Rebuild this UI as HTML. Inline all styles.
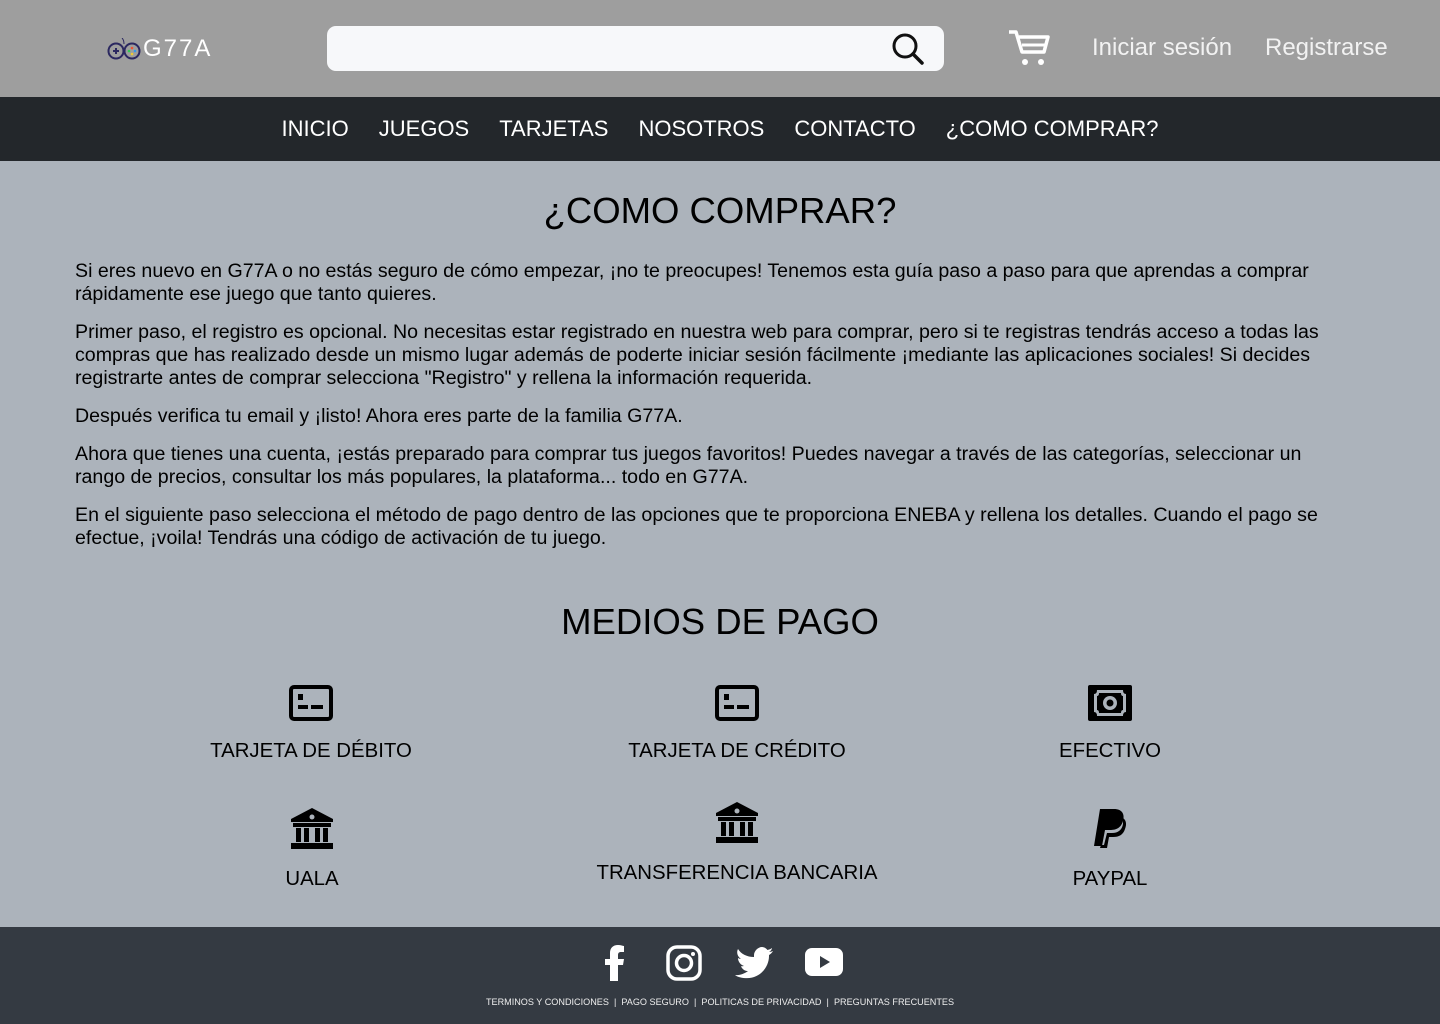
<!DOCTYPE html>
<html><head><meta charset="utf-8"><style>
*{margin:0;padding:0;box-sizing:border-box}
body{width:1440px;height:1024px;overflow:hidden;font-family:"Liberation Sans",Arial,sans-serif;background:#acb3bb;color:#000;position:relative}
.hdr{position:absolute;top:0;left:0;width:1440px;height:97px;background:#9e9e9e}
.logo{position:absolute;left:107px;top:35px;display:flex;align-items:center;color:#fff;font-size:24px;letter-spacing:2px}
.search{position:absolute;left:327px;top:26px;width:617px;height:45px;background:#f7f8fa;border-radius:9px}
.hl{position:absolute;top:34px;color:#f2f2f2;font-size:24px}
.nav{position:absolute;top:97px;left:0;width:1440px;height:64px;background:#23272b;display:flex;justify-content:center;align-items:center;gap:30px;color:#fff;font-size:22px}
h1{position:absolute;top:190px;width:1440px;text-align:center;font-weight:normal;font-size:36.5px}
.txt{position:absolute;left:75px;top:260px;font-size:19.6px;line-height:23px;white-space:nowrap}
.txt p{margin-bottom:15px}
h2{position:absolute;top:601px;width:1440px;text-align:center;font-weight:normal;font-size:36.5px}
.pm{position:absolute;width:400px;text-align:center;font-size:20.4px}
.pm svg{display:block;margin:0 auto}
.ft{position:absolute;top:927px;left:0;width:1440px;height:97px;background:#343a42;color:#fff}
.links{position:absolute;top:997px;width:1440px;text-align:center;font-size:9.1px;color:#eee}
</style></head><body>
<div class="hdr">
 <div class="logo"><svg width="36" height="22" viewBox="0 0 36 22"><circle cx="9" cy="13" r="7.5" fill="none" stroke="#2b2860" stroke-width="2"/><circle cx="25" cy="13" r="7.5" fill="none" stroke="#2b2860" stroke-width="2"/><path d="M6 13h6M9 10v6" stroke="#2b2860" stroke-width="2"/><circle cx="25" cy="10" r="1.3" fill="#e53"/><circle cx="22" cy="13" r="1.3" fill="#3c5"/><circle cx="28" cy="13" r="1.3" fill="#39e"/><circle cx="25" cy="16" r="1.3" fill="#ec3"/><path d="M17 6 Q17 2 15 0" stroke="#2b2860" fill="none"/></svg>G77A</div>
 <div class="search"><svg style="position:absolute;left:563px;top:5px" width="36" height="36" viewBox="0 0 36 36"><circle cx="15" cy="15" r="11" fill="none" stroke="#111" stroke-width="3"/><path d="M23 23l9 9" stroke="#111" stroke-width="3.5" stroke-linecap="round"/></svg></div>
 <svg style="position:absolute;left:1007px;top:28px" width="44" height="40" viewBox="0 0 44 40"><path d="M2 4h7l6 20h22l4-15H12" fill="none" stroke="#fff" stroke-width="3.5" stroke-linejoin="round"/><path d="M15 17h24" stroke="#fff" stroke-width="3"/><circle cx="18" cy="34" r="3" fill="#fff"/><circle cx="34" cy="34" r="3" fill="#fff"/></svg>
 <div class="hl" style="left:1092px">Iniciar sesión</div>
 <div class="hl" style="left:1265px">Registrarse</div>
</div>
<div class="nav"><span>INICIO</span><span>JUEGOS</span><span>TARJETAS</span><span>NOSOTROS</span><span>CONTACTO</span><span>¿COMO COMPRAR?</span></div>
<h1>¿COMO COMPRAR?</h1>
<div class="txt">
<p>Si eres nuevo en G77A o no estás seguro de cómo empezar, ¡no te preocupes! Tenemos esta guía paso a paso para que aprendas a comprar<br>rápidamente ese juego que tanto quieres.</p>
<p>Primer paso, el registro es opcional. No necesitas estar registrado en nuestra web para comprar, pero si te registras tendrás acceso a todas las<br>compras que has realizado desde un mismo lugar además de poderte iniciar sesión fácilmente ¡mediante las aplicaciones sociales! Si decides<br>registrarte antes de comprar selecciona "Registro" y rellena la información requerida.</p>
<p>Después verifica tu email y ¡listo! Ahora eres parte de la familia G77A.</p>
<p>Ahora que tienes una cuenta, ¡estás preparado para comprar tus juegos favoritos! Puedes navegar a través de las categorías, seleccionar un<br>rango de precios, consultar los más populares, la plataforma... todo en G77A.</p>
<p>En el siguiente paso selecciona el método de pago dentro de las opciones que te proporciona ENEBA y rellena los detalles. Cuando el pago se<br>efectue, ¡voila! Tendrás una código de activación de tu juego.</p>
</div>
<h2>MEDIOS DE PAGO</h2>
<div class="pm" style="left:111px;top:685px"><svg width="44" height="36" viewBox="0 0 44 36"><rect x="2" y="2" width="40" height="32" rx="3" fill="none" stroke="#000" stroke-width="4"/><rect x="9" y="9" width="5" height="6"/><rect x="9" y="20" width="10" height="4"/><rect x="22" y="20" width="12" height="4"/></svg><div style="margin-top:19px">TARJETA DE DÉBITO</div></div>
<div class="pm" style="left:537px;top:685px"><svg width="44" height="36" viewBox="0 0 44 36"><rect x="2" y="2" width="40" height="32" rx="3" fill="none" stroke="#000" stroke-width="4"/><rect x="9" y="9" width="5" height="6"/><rect x="9" y="20" width="10" height="4"/><rect x="22" y="20" width="12" height="4"/></svg><div style="margin-top:19px">TARJETA DE CRÉDITO</div></div>
<div class="pm" style="left:910px;top:685px"><svg width="44" height="36" viewBox="0 0 44 36"><rect x="0" y="0" width="44" height="36" rx="2"/><path d="M6 9 Q9 9 9 5 H35 Q35 9 38 9 V27 Q35 27 35 31 H9 Q9 27 6 27Z" fill="#acb3bb"/><path d="M9 11 Q11 11 11 8 H33 Q33 11 35 11 V25 Q33 25 33 28 H11 Q11 25 9 25Z"/><circle cx="22" cy="18" r="7" fill="#acb3bb"/><circle cx="22" cy="18" r="3.5"/></svg><div style="margin-top:19px">EFECTIVO</div></div>
<div class="pm" style="left:112px;top:808px"><svg width="44" height="42" viewBox="0 0 44 42"><path d="M22 0L1 11v3h42v-3z"/><circle cx="22" cy="9" r="2.5" fill="#acb3bb"/><rect x="3" y="15" width="38" height="4"/><rect x="6" y="20" width="5" height="14"/><rect x="14" y="20" width="5" height="14"/><rect x="25" y="20" width="5" height="14"/><rect x="33" y="20" width="5" height="14"/><rect x="1" y="35" width="42" height="6"/></svg><div style="margin-top:18px">UALA</div></div>
<div class="pm" style="left:537px;top:802px"><svg width="44" height="42" viewBox="0 0 44 42"><path d="M22 0L1 11v3h42v-3z"/><circle cx="22" cy="9" r="2.5" fill="#acb3bb"/><rect x="3" y="15" width="38" height="4"/><rect x="6" y="20" width="5" height="14"/><rect x="14" y="20" width="5" height="14"/><rect x="25" y="20" width="5" height="14"/><rect x="33" y="20" width="5" height="14"/><rect x="1" y="35" width="42" height="6"/></svg><div style="margin-top:18px">TRANSFERENCIA BANCARIA</div></div>
<div class="pm" style="left:910px;top:808px"><svg width="36" height="42" viewBox="0 0 36 42"><path d="M8 1h14c8 0 11 5 9 12-2 7-7 9-13 9h-5l-3 16H2z"/><path d="M31 10c3 2 4 6 2 11-2 6-6 8-12 8h-4l-2 11H8l1-3h3l3-12h5c6 0 10-3 11-9z"/></svg><div style="margin-top:18px">PAYPAL</div></div>
<div class="ft">
 <svg style="position:absolute;left:603px;top:18px" width="24" height="36" viewBox="0 0 24 36"><path d="M15 36V20h5l1-6h-6v-4c0-2 1-3 3-3h3V1c-1 0-3-1-6-1-5 0-8 3-8 8v6H2v6h5v16z" fill="#fff"/></svg>
 <svg style="position:absolute;left:666px;top:18px" width="36" height="36" viewBox="0 0 36 36"><rect x="2" y="2" width="32" height="32" rx="9" fill="none" stroke="#fff" stroke-width="3.5"/><circle cx="18" cy="18" r="7.5" fill="none" stroke="#fff" stroke-width="3.5"/><circle cx="27" cy="9" r="2" fill="#fff"/></svg>
 <svg style="position:absolute;left:735px;top:20px" width="38" height="32" viewBox="0 0 38 32"><path d="M38 4c-1 .6-3 1-4 1 2-1 3-3 3-4-1 1-3 1.5-4.5 2C31 1 29 0 27 0c-4 0-8 4-8 8v2C12 10 6 7 3 2c-2 4 0 8 3 10-1 0-2-.5-3-1 0 4 3 7 6 8-1 .3-2 .3-3 .1 1 3 4 5 7 5-3 2-7 4-11 4H0c3 2 7 3 12 3 14 0 22-12 22-22v-1c1.5-1 3-2.5 4-4z" fill="#fff"/></svg>
 <svg style="position:absolute;left:805px;top:21px" width="38" height="28" viewBox="0 0 38 28"><rect x="0" y="0" width="38" height="28" rx="7" fill="#fff"/><path d="M15 8v12l10-6z" fill="#343a42"/></svg>
</div>
<div class="links">TERMINOS Y CONDICIONES &nbsp;|&nbsp; PAGO SEGURO &nbsp;|&nbsp; POLITICAS DE PRIVACIDAD &nbsp;|&nbsp; PREGUNTAS FRECUENTES</div>
</body></html>
